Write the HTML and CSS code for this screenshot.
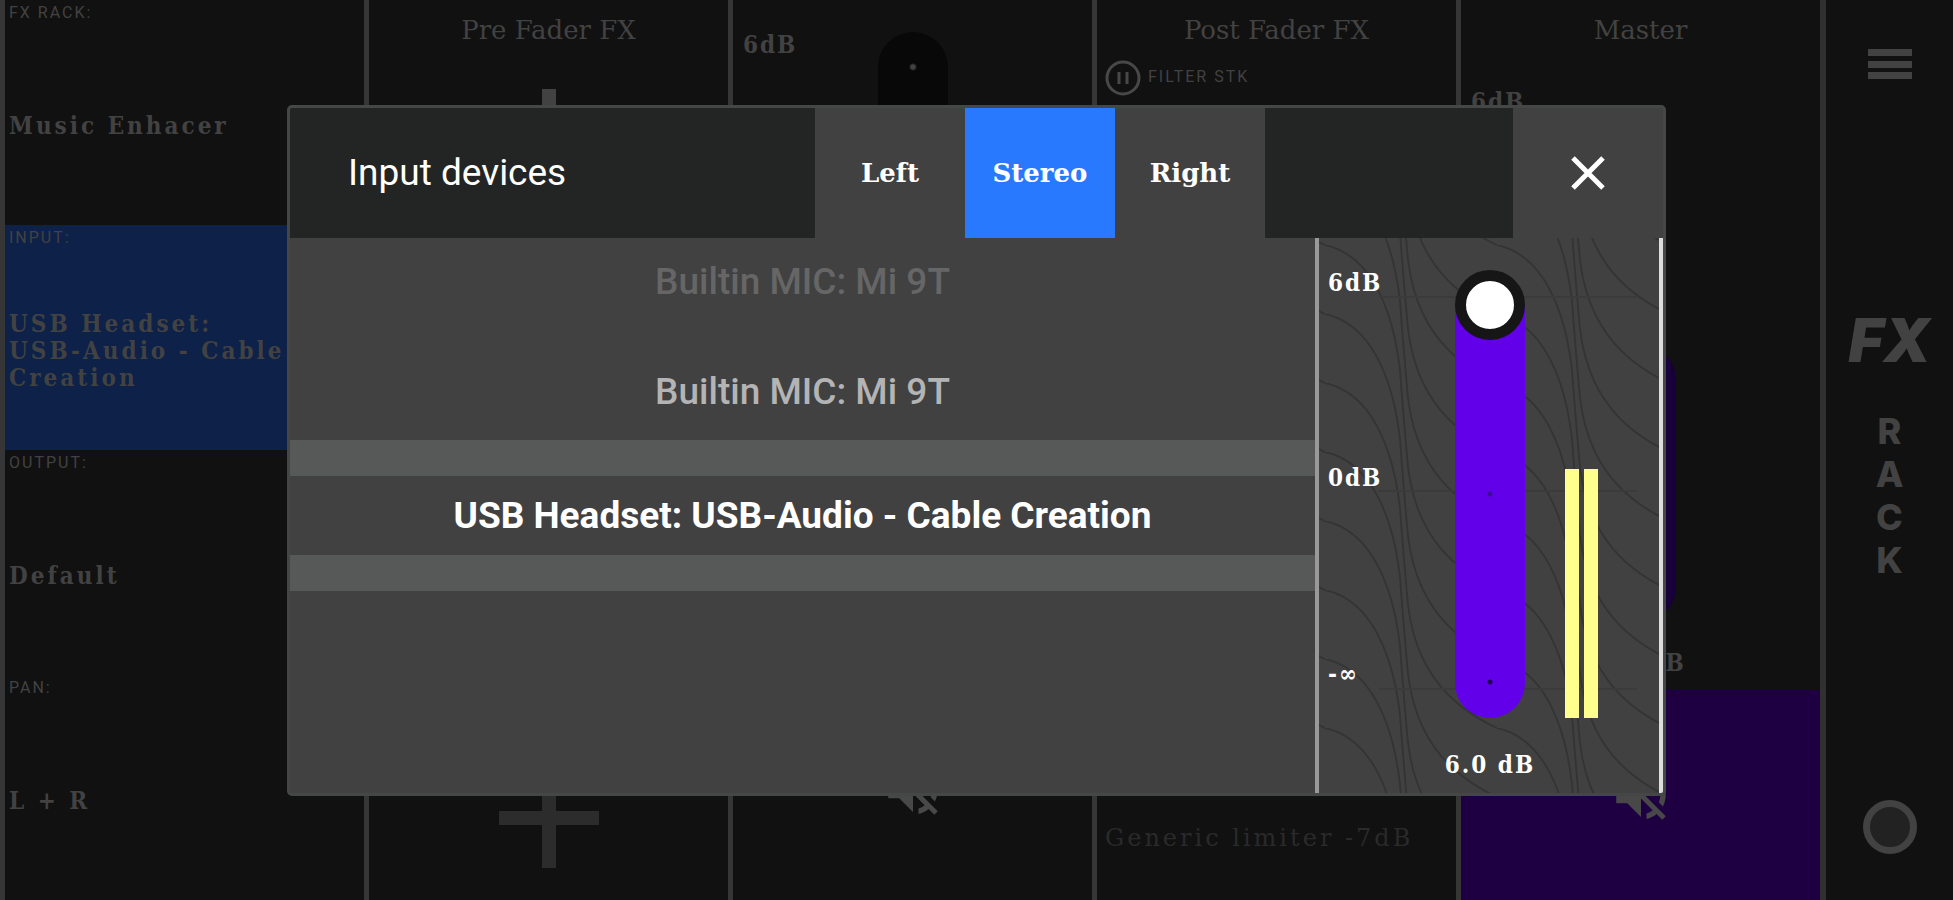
FILE: index.html
```html
<!DOCTYPE html>
<html lang="en">
<head>
    <meta charset="UTF-8">
    <meta name="viewport" content="width=device-width, initial-scale=1.0">
    <title>FX Rack - Input devices</title>
    <link rel="stylesheet" href="styles.css">
</head>
<body>
    <div class="mixer">
        <section class="strip routing">
            <div class="route">
                <span class="route-label">FX RACK:</span>
                <span class="route-value">Music Enhacer</span>
            </div>
            <div class="route active">
                <span class="route-label">INPUT:</span>
                <span class="route-value">USB Headset:<br>USB-Audio - Cable<br>Creation</span>
            </div>
            <div class="route">
                <span class="route-label">OUTPUT:</span>
                <span class="route-value">Default</span>
            </div>
            <div class="route">
                <span class="route-label">PAN:</span>
                <span class="route-value">L + R</span>
            </div>
        </section>

        <section class="strip">
            <h2 class="strip-title">Pre Fader FX</h2>
            <div class="slots">
                <svg class="plus" viewBox="0 0 100 100"><path d="M43 0h14v43h43v14H57v43H43V57H0V43h43z"/></svg>
                <svg class="plus dim" viewBox="0 0 100 100"><path d="M43 0h14v43h43v14H57v43H43V57H0V43h43z"/></svg>
            </div>
        </section>

        <section class="strip channel">
            <div class="channel-level">
                <span class="level-label">6dB</span>
                <div class="track"></div>
            </div>
            <div class="mute">
                <svg class="mute-icon" viewBox="0 0 24 24"><path d="M16.500 12c0-1.770-1.020-3.290-2.500-4.030v2.210l2.450 2.450c.030-.200.050-.410.050-.630zm2.500 0c0 .940-.200 1.820-.540 2.640l1.510 1.510C20.630 14.910 21 13.500 21 12c0-4.280-2.990-7.860-7-8.770v2.060c2.890.860 5 3.540 5 6.710zM4.270 3L3 4.270 7.730 9H3v6h4l5 5v-6.730l4.250 4.250c-.670.520-1.420.930-2.250 1.180v2.060c1.380-.310 2.630-.950 3.690-1.810L19.730 21 21 19.730l-9-9L4.270 3zM12 4L9.910 6.090 12 8.180V4z"/></svg>
            </div>
        </section>

        <section class="strip">
            <h2 class="strip-title">Post Fader FX</h2>
            <div class="effect">
                <svg class="effect-icon" viewBox="0 0 36 36"><circle cx="18" cy="18" r="16"/><path d="M14 12v12M22 12v12"/></svg>
                <span>FILTER STK</span>
            </div>
            <div class="limiter">Generic limiter -7dB</div>
        </section>

        <section class="strip master">
            <h2 class="strip-title">Master</h2>
            <div class="channel-level">
                <span class="level-label">6dB</span>
                <div class="track"></div>
                <span class="level-value">6.0 dB</span>
            </div>
            <div class="mute">
                <svg class="mute-icon" viewBox="0 0 24 24"><path d="M16.500 12c0-1.770-1.020-3.290-2.500-4.030v2.210l2.450 2.450c.030-.200.050-.410.050-.630zm2.500 0c0 .940-.200 1.820-.540 2.640l1.510 1.510C20.630 14.910 21 13.500 21 12c0-4.280-2.990-7.860-7-8.770v2.060c2.890.860 5 3.540 5 6.710zM4.270 3L3 4.270 7.730 9H3v6h4l5 5v-6.730l4.250 4.250c-.670.520-1.420.930-2.250 1.180v2.060c1.380-.310 2.630-.950 3.690-1.810L19.730 21 21 19.730l-9-9L4.270 3zM12 4L9.910 6.090 12 8.180V4z"/></svg>
            </div>
        </section>

        <nav class="sidebar">
            <button class="menu" aria-label="Menu">
                <svg viewBox="0 0 44 30"><path d="M0 0h44v7H0zM0 12h44v7H0zM0 23h44v7H0z"/></svg>
            </button>
            <div class="brand">
                <span class="brand-fx">FX</span>
                <span class="brand-rack">R<br>A<br>C<br>K</span>
            </div>
            <button class="record" aria-label="Record"></button>
        </nav>
    </div>

    <div class="overlay">
        <div class="dialog" role="dialog" aria-labelledby="dialog-title">
            <header class="dialog-header">
                <h1 class="dialog-title" id="dialog-title">Input devices</h1>
                <button class="side">Left</button>
                <button class="side selected">Stereo</button>
                <button class="side">Right</button>
                <div class="spacer"></div>
                <button class="close" aria-label="Close">
                    <svg viewBox="0 0 36 36"><path d="M3 3l30 30M33 3L3 33"/></svg>
                </button>
            </header>

            <div class="dialog-body">
                <div class="devices">
                    <div class="device-list">
                        <button class="device far">Builtin MIC: Mi 9T</button>
                        <button class="device">Builtin MIC: Mi 9T</button>
                    </div>
                    <button class="device current">USB Headset: USB-Audio - Cable Creation</button>
                </div>

                <div class="fader">
                    <svg class="waves" aria-hidden="true">
                        <defs>
                            <path id="wave" d="M0 0C46 10 68 64 75 125C78 165 80 190 83 222C90 280 118 320 172 345"/>
                            <pattern id="wave-tile" width="172" height="69" patternUnits="userSpaceOnUse" x="6" y="7">
                                <use href="#wave"/>
                                <use href="#wave" y="-69"/>
                                <use href="#wave" y="-138"/>
                                <use href="#wave" y="-207"/>
                                <use href="#wave" y="-276"/>
                                <use href="#wave" y="-345"/>
                            </pattern>
                        </defs>
                        <rect width="100%" height="100%" fill="url(#wave-tile)"/>
                        <path class="guides" d="M60 59h258M60 253h258M60 451h258"/>
                    </svg>
                    <div class="scale">
                        <span>6dB</span>
                        <span>0dB</span>
                        <span>-∞</span>
                    </div>
                    <input class="gain" type="range" min="-60" max="6" value="6" step="0.1" aria-label="Input gain">
                    <div class="meters">
                        <div class="meter"></div>
                        <div class="meter"></div>
                    </div>
                    <output class="gain-value">6.0 dB</output>
                </div>
            </div>
        </div>
    </div>
</body>
</html>
```
FILE: styles.css
```css
* {
    box-sizing: border-box;
}

body {
    margin: 0;
    background-color: #111;
    color: #424242;
    font-family: "DejaVu Serif Condensed", "DejaVu Serif", serif;
    font-size: 24px;
}

h1, h2 {
    margin: 0;
    font-weight: normal;
}

button {
    border: none;
    padding: 0;
    background: none;
    color: inherit;
    font: inherit;
    cursor: pointer;
}

svg {
    display: block;
}

/* mixer behind the dialog */
.mixer {
    display: grid;
    grid-template-columns: repeat(5, 1fr) 133px;
    min-height: 100vh;
}

.strip {
    display: flex;
    flex-direction: column;
    border-left: 5px solid #363636;
}

.strip-title {
    height: 60px;
    font-family: "DejaVu Serif", serif;
    font-size: 26px;
    line-height: 60px;
    text-align: center;
}

.route {
    flex: 1;
    display: flex;
    flex-direction: column;
    padding: 4px;
}

.route.active {
    background-color: #0d2149;
}

.route-label {
    font-family: Roboto, sans-serif;
    font-size: 16px;
    line-height: 18px;
    letter-spacing: 2px;
}

.route-value {
    flex: 1;
    display: flex;
    align-items: center;
    padding-top: 8px;
    font-weight: bold;
    line-height: 27px;
    letter-spacing: 3px;
    white-space: nowrap;
}

.slots {
    flex: 1;
    display: flex;
    flex-direction: column;
    justify-content: space-between;
    align-items: center;
    padding: 29px 0 32px;
}

.plus {
    width: 100px;
    height: 100px;
    fill: #424242;
}

.plus.dim {
    fill: #2c2c2c;
}

.channel-level {
    flex: 1;
    display: grid;
    grid-template-rows: 1fr auto;
    justify-items: center;
    padding: 32px 10px 14px;
}

.level-label {
    grid-area: 1 / 1;
    justify-self: start;
    font-weight: bold;
    line-height: 26px;
    letter-spacing: 2px;
}

.level-value {
    font-weight: bold;
    line-height: 26px;
    letter-spacing: 2px;
}

.track {
    grid-area: 1 / 1;
    width: 70px;
    border-radius: 35px;
    background: radial-gradient(circle at 35px 35px, #424242 2px, transparent 4px) #080808;
}

.mute {
    display: flex;
    justify-content: center;
    align-items: center;
    height: 220px;
}

.mute-icon {
    width: 66px;
    height: 66px;
    fill: #484848;
}

.master .channel-level {
    padding-top: 29px;
}

.master .track {
    margin: 256px 0 28px;
    background: #17003a;
}

.master .mute {
    height: 210px;
    background-color: #1e0042;
}

.effect {
    flex: 1;
    display: flex;
    align-items: flex-start;
    gap: 7px;
    padding-left: 8px;
    font-family: Roboto, sans-serif;
    font-size: 16px;
    line-height: 34px;
    letter-spacing: 2px;
}

.effect-icon {
    width: 36px;
    height: 36px;
    fill: none;
    stroke: #484848;
    stroke-width: 3;
}

.limiter {
    padding: 0 8px 44px;
    color: #2a2a2a;
    font-family: "DejaVu Serif", serif;
    line-height: 36px;
    letter-spacing: 3px;
    white-space: nowrap;
}

.sidebar {
    display: flex;
    flex-direction: column;
    align-items: center;
    justify-content: space-between;
    padding: 49px 0 46px;
    border-left: 6px solid #303030;
}

.menu svg {
    width: 44px;
    height: 30px;
    fill: #424242;
}

.brand {
    display: flex;
    flex-direction: column;
    align-items: center;
    gap: 40px;
    padding-top: 12px;
    font-family: Inter, sans-serif;
}

.brand-fx {
    font-size: 60px;
    font-style: italic;
    font-weight: 900;
    line-height: 60px;
}

.brand-rack {
    font-size: 36px;
    font-weight: 800;
    line-height: 43px;
    text-align: center;
}

.record {
    width: 54px;
    height: 54px;
    border: 7px solid #424242;
    border-radius: 50%;
    background-color: #222;
}

/* dialog */
.overlay {
    position: absolute;
    inset: 0;
    display: flex;
    align-items: center;
    padding: 0 287px;
}

.dialog {
    flex: 1;
    border: 3px solid #454646;
    border-radius: 5px;
    background-color: #414141;
    color: #fff;
    overflow: hidden;
}

.dialog-header {
    display: grid;
    grid-template-columns: 1fr repeat(3, 150px) 248px 150px;
    height: 130px;
}

.dialog-title {
    padding-left: 58px;
    background-color: #222524;
    font-family: Roboto, sans-serif;
    font-size: 37px;
    line-height: 130px;
}

.side {
    font-family: "DejaVu Serif", serif;
    font-size: 26px;
    font-weight: bold;
}

.side.selected {
    background-color: #2979ff;
}

.spacer {
    background-color: #222524;
}

.close {
    display: flex;
    justify-content: center;
    align-items: center;
}

.close svg {
    width: 36px;
    height: 36px;
    stroke: #fff;
    stroke-width: 5;
}

.dialog-body {
    display: grid;
    grid-template-columns: 1fr 348px;
}

.devices {
    font-family: Roboto, sans-serif;
    font-size: 37px;
}

.device-list {
    display: flex;
    flex-direction: column;
    gap: 22px;
    padding-bottom: 4px;
}

.device {
    height: 88px;
    color: #b4b4b4;
    font-weight: 500;
}

.device.far {
    color: #666;
}

.device.current {
    width: 100%;
    height: 151px;
    border-top: 36px solid #575958;
    border-bottom: 36px solid #575958;
    color: #fff;
    font-weight: bold;
}

.fader {
    position: relative;
    display: grid;
    grid-template-columns: 127px 70px 75px;
    grid-template-rows: 448px 75px;
    padding: 32px 0 0 9px;
    border-left: 4px solid #999;
    border-right: 4px solid #ddd;
    font-weight: bold;
    line-height: 26px;
    letter-spacing: 2px;
}

/* contour lines under the fader */
.waves {
    position: absolute;
    inset: 0;
    width: 100%;
    height: 100%;
    fill: none;
    stroke: #343434;
    stroke-width: 2;
}

.waves rect {
    stroke: none;
}

.guides {
    stroke: #3b3b3b;
}

.scale,
.gain,
.meters,
.gain-value {
    z-index: 1;
}

.scale {
    display: flex;
    flex-direction: column;
    justify-content: space-between;
    padding-bottom: 31px;
}

.gain {
    appearance: none;
    writing-mode: vertical-lr;
    direction: rtl;
    width: 70px;
    height: 448px;
    margin: 0;
    border-radius: 35px;
    background:
        radial-gradient(circle at 35px 224px, #3a1090 2px, transparent 3px),
        radial-gradient(circle at 35px 412px, #200050 2px, transparent 3px),
        linear-gradient(transparent 35px, #6200ea 35px);
}

.gain::-webkit-slider-thumb {
    appearance: none;
    width: 70px;
    height: 70px;
    border: 11px solid #161616;
    border-radius: 50%;
    background-color: #fff;
}

.meters {
    display: flex;
    align-items: flex-end;
    gap: 5px;
    margin-left: 40px;
}

.meter {
    width: 14px;
    height: 249px;
    background-color: #ffff8d;
}

.gain-value {
    grid-column: 2;
    justify-self: center;
    align-self: center;
    padding-top: 20px;
    white-space: nowrap;
}
```
